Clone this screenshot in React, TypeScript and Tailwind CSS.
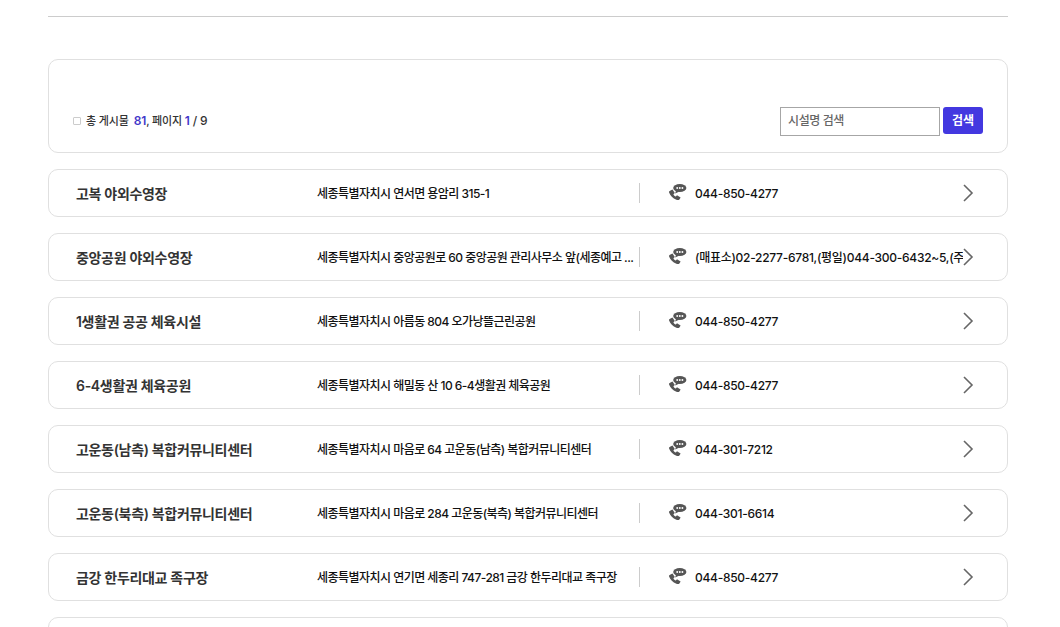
const rows = [
  ["고복 야외수영장", "세종특별자치시 연서면 용암리 315-1", "044-850-4277"],
  ["중앙공원 야외수영장", "세종특별자치시 중앙공원로 60 중앙공원 관리사무소 앞(세종예고 ...", "(매표소)02-2277-6781,(평일)044-300-6432~5,(주말)044-300-6400"],
  ["1생활권 공공 체육시설", "세종특별자치시 아름동 804 오가낭뜰근린공원", "044-850-4277"],
  ["6-4생활권 체육공원", "세종특별자치시 해밀동 산 10 6-4생활권 체육공원", "044-850-4277"],
  ["고운동(남측) 복합커뮤니티센터", "세종특별자치시 마음로 64 고운동(남측) 복합커뮤니티센터", "044-301-7212"],
  ["고운동(북측) 복합커뮤니티센터", "세종특별자치시 마음로 284 고운동(북측) 복합커뮤니티센터", "044-301-6614"],
  ["금강 한두리대교 족구장", "세종특별자치시 연기면 세종리 747-281 금강 한두리대교 족구장", "044-850-4277"],
];

function PhoneIcon() {
  return (
    <svg width="20" height="18" viewBox="0 0 20 18" className="shrink-0">
      <path
        d="M2.5 6.5 L4.5 5.5 L6.8 9 L5.4 10.2 C5.8 11.2 6.8 12.2 7.8 12.6 L9 11.2 L12.6 13.6 L11.6 15.2 C10.8 16.3 9.6 16.3 8.4 15.8 C4.8 14.4 2.2 11.8 1.1 8.6 C0.8 7.6 1.4 7 2.5 6.5 Z"
        fill="#555555"
      />
      <ellipse cx="11.8" cy="4" rx="6.6" ry="4" fill="#555555" />
      <path d="M8 6.5 L7.2 9.6 L11.4 7.6 Z" fill="#555555" />
      <circle cx="9.2" cy="4" r="0.95" fill="#fff" />
      <circle cx="11.8" cy="4" r="0.95" fill="#fff" />
      <circle cx="14.4" cy="4" r="0.95" fill="#fff" />
    </svg>
  );
}

function Row({ name, addr, tel }: { name: string; addr: string; tel: string }) {
  return (
    <li className="relative flex h-12 items-center rounded-[10px] border border-[#e0e0e0] bg-white">
      <div className="w-[268px] shrink-0 truncate pl-[27px] text-[14px] font-semibold tracking-[-0.32px] text-[#333333]">{name}</div>
      <div className="flex h-[20px] w-[323px] shrink-0 items-center border-r border-[#cccccc]">
        <span className="pt-[2px] text-[12px] font-medium tracking-[-0.54px] whitespace-nowrap text-[#111111]">{addr}</span>
      </div>
      <div className="flex min-w-0 items-center pl-[28px]">
        <PhoneIcon />
        <span className="ml-[7px] w-[268px] overflow-hidden pt-[2px] text-[12px] font-medium tracking-[-0.28px] whitespace-nowrap text-[#111111]">{tel}</span>
      </div>
      <svg width="14" height="20" viewBox="0 0 14 20" fill="none" className="absolute top-[13px] right-[32px]">
        <path d="M3 2 L11 10 L3 18" stroke="#666666" strokeWidth="1.6" />
      </svg>
    </li>
  );
}

export default function App() {
  return (
    <div className="h-[627px] overflow-hidden bg-white pt-4 pr-[52px] pl-12 font-['Inter','Noto_Sans_CJK_KR',sans-serif]">
      <hr className="border-t border-[#cccccc]" />
      <section className="mt-[42px] flex h-[94px] items-start justify-between rounded-[10px] border border-[#e0e0e0] px-6 pt-[47px]">
        <div className="flex items-center pt-[5px] text-[11px] font-medium tracking-[-0.15px] text-[#333333]">
          <span className="mr-[5px] h-2 w-2 rounded-[1px] border border-[#cccccc]" />
          <span>총 게시물</span>
          <span className="ml-[5px] text-[12px] font-semibold text-[#4338ca]">81</span>
          <span>, 페이지&nbsp;</span>
          <span className="text-[12px] font-semibold text-[#4338ca]">1</span>
          <span className="text-[12px]">&nbsp;/ 9</span>
        </div>
        <div className="flex items-start gap-[3px]">
          <input
            readOnly
            placeholder="시설명 검색"
            className="h-[29px] w-40 border border-[#a6a6a6] px-[7px] pb-[2px] text-[12px] font-medium tracking-[-0.4px] placeholder:text-[#666666] outline-none"
          />
          <button className="h-[27px] w-10 rounded-[3px] bg-[#4338e0] text-[12px] font-bold text-white">검색</button>
        </div>
      </section>
      <ul className="mt-4 flex flex-col gap-4">
        {rows.map((r) => (
          <Row key={r[0]} name={r[0]} addr={r[1]} tel={r[2]} />
        ))}
        <li className="h-12 rounded-[10px] border border-[#e0e0e0] bg-white" />
      </ul>
    </div>
  );
}
